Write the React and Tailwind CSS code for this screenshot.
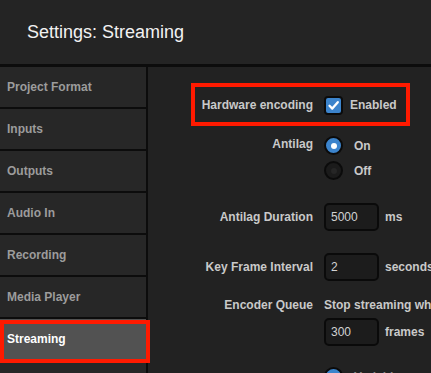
import React from "react";

function Row({ label, children, className = "" }) {
  return (
    <div className={"flex items-center " + className}>
      <div className="w-[165px] shrink-0 text-right font-bold text-[12px] text-[#c9c9c9]">{label}</div>
      <div className="ml-[11px] flex items-center">{children}</div>
    </div>
  );
}

function Radio({ on }) {
  return on ? (
    <div className="w-[19px] h-[19px] rounded-full bg-[#3c84cc] border-[2px] border-[#0b0b0b] flex items-center justify-center">
      <div className="w-[6px] h-[6px] rounded-full bg-white" />
    </div>
  ) : (
    <div className="w-[19px] h-[19px] rounded-full bg-[#1b1b1b] border-[2px] border-[#0b0b0b] flex items-center justify-center">
      <div className="w-[6px] h-[6px] rounded-full bg-[#262626]" />
    </div>
  );
}

function Field({ value, unit }) {
  return (
    <>
      <div className="w-[55px] h-[28px] rounded-[5px] border-[2px] border-[#0a0a0a] bg-[#1c1c1c] flex items-center pl-[5px] text-[12px] text-[#d2d2d2]">
        {value}
      </div>
      <span className="ml-[6px] font-bold text-[12px] text-[#c9c9c9] whitespace-nowrap">{unit}</span>
    </>
  );
}

export default function App() {
  const items = ["Project Format", "Inputs", "Outputs", "Audio In", "Recording", "Media Player", "Streaming", ""];
  return (
    <div
      className="w-[431px] h-[373px] overflow-hidden bg-[#232323] flex flex-col"
      style={{ fontFamily: '"Liberation Sans", Arial, sans-serif' }}
    >
      <div className="h-[64px] shrink-0 flex items-center pl-[27px] text-[18px] text-[#f2f2f2] bg-[#242424]">
        Settings: Streaming
      </div>
      <div className="h-[3px] shrink-0 bg-[#0c0c0c]" />
      <div className="flex flex-1 min-h-0">
        <div className="w-[148px] shrink-0 flex flex-col gap-[2px] bg-[#0c0c0c] border-r-[2px] border-[#0c0c0c] relative z-10">
          {items.map((it, i) =>
            it === "Streaming" ? (
              <div key={i} className="relative h-[40px] shrink-0 bg-[#525252] flex items-center pl-[7px] font-bold text-[12px] text-white">
                Streaming
                <div className="absolute left-0 top-[1px] w-[150px] h-[43px] border-[4px] border-[#ff1a00]" />
              </div>
            ) : (
              <div key={i} className="h-[40px] shrink-0 bg-[#272727] flex items-center pl-[7px] font-bold text-[12px] text-[#9c9c9c]">
                {it}
              </div>
            )
          )}
        </div>
        <div className="flex-1 bg-[#222222] flex flex-col relative">
          <div className="absolute left-[43px] top-[16px] w-[219px] h-[43px] border-[4px] border-[#ff1a00]" />
          <Row label="Hardware encoding" className="h-[18px] mt-[29px]">
            <div className="w-[19px] h-[19px] rounded-[4px] bg-[#3c84cc] border-[2px] border-[#0b0b0b] flex items-center justify-center">
              <svg width="13" height="13" viewBox="0 0 13 13">
                <path d="M2.5 6.8 L5.3 9.6 L10.8 3.2" fill="none" stroke="white" strokeWidth="2.3" strokeLinecap="round" strokeLinejoin="round" />
              </svg>
            </div>
            <span className="ml-[7px] font-bold text-[12px] text-[#c9c9c9]">Enabled</span>
          </Row>
          <Row label={<span className="relative top-[-2px]">Antilag</span>} className="h-[19px] mt-[22px]">
            <Radio on />
            <span className="ml-[11px] font-bold text-[12px] text-[#c9c9c9]">On</span>
          </Row>
          <Row label="" className="h-[19px] mt-[6px]">
            <Radio />
            <span className="ml-[11px] font-bold text-[12px] text-[#c9c9c9]">Off</span>
          </Row>
          <Row label="Antilag Duration" className="h-[28px] mt-[23px]">
            <Field value="5000" unit="ms" />
          </Row>
          <Row label="Key Frame Interval" className="h-[28px] mt-[22px]">
            <Field value="2" unit="seconds" />
          </Row>
          <Row label="Encoder Queue" className="h-[16px] mt-[16px]">
            <span className="font-bold text-[12px] text-[#c9c9c9] whitespace-nowrap">Stop streaming when queue exceeds</span>
          </Row>
          <Row label="" className="h-[28px] mt-[5px]">
            <Field value="300" unit="frames" />
          </Row>
          <Row label="" className="h-[19px] mt-[21px]">
            <Radio on />
            <span className="ml-[11px] font-bold text-[12px] text-[#8a8a8a]">Variable</span>
          </Row>
        </div>
      </div>
    </div>
  );
}
